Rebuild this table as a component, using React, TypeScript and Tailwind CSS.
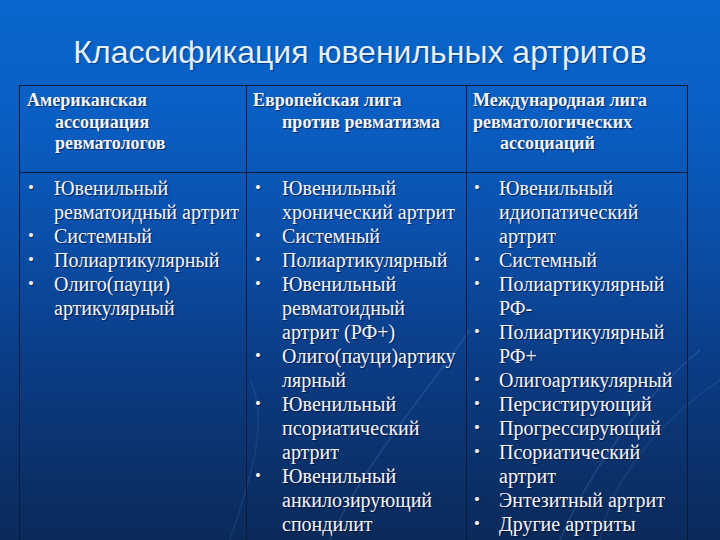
import React from "react";

type Item = string[];

const col1: Item[] = [
  ["Ювенильный", "ревматоидный артрит"],
  ["Системный"],
  ["Полиартикулярный"],
  ["Олиго(пауци)", "артикулярный"],
];
const col2: Item[] = [
  ["Ювенильный", "хронический артрит"],
  ["Системный"],
  ["Полиартикулярный"],
  ["Ювенильный", "ревматоидный", "артрит (РФ+)"],
  ["Олиго(пауци)артику", "лярный"],
  ["Ювенильный", "псориатический", "артрит"],
  ["Ювенильный", "анкилозирующий", "спондилит"],
];
const col3: Item[] = [
  ["Ювенильный", "идиопатический", "артрит"],
  ["Системный"],
  ["Полиартикулярный", "РФ-"],
  ["Полиартикулярный", "РФ+"],
  ["Олигоартикулярный"],
  ["Персистирующий"],
  ["Прогрессирующий"],
  ["Псориатический", "артрит"],
  ["Энтезитный артрит"],
  ["Другие артриты"],
];

function List({ items, bulletCls }: { items: Item[]; bulletCls: string }) {
  return (
    <div className="pt-[3px]">
      {items.map((it, i) => (
        <div key={i} className="flex">
          <div className={`${bulletCls} shrink-0 h-[24px] leading-[24px] text-[17px]`}>•</div>
          <div>
            {it.map((l, j) => (
              <div key={j} className="whitespace-nowrap h-[24px] leading-[24px]">
                {l}
              </div>
            ))}
          </div>
        </div>
      ))}
    </div>
  );
}

export default function App() {
  return (
    <div className="relative w-[720px] h-[540px] overflow-hidden bg-[linear-gradient(180deg,#0766cc_0%,#0a5fc4_20%,#0a4ea8_45%,#0b3a80_70%,#0a2a5a_100%)]">
      <svg className="absolute inset-0 pointer-events-none" width="720" height="540" viewBox="0 0 720 540">
        <path d="M330 540 C 360 470, 420 400, 470 330" stroke="rgba(120,170,255,0.18)" strokeWidth="1.5" fill="none" />
        <path d="M560 540 C 590 470, 640 400, 700 350" stroke="rgba(120,170,255,0.18)" strokeWidth="1.5" fill="none" />
        <path d="M600 540 C 610 480, 660 420, 720 380" stroke="rgba(120,170,255,0.12)" strokeWidth="1.5" fill="none" />
        <path d="M230 540 C 250 480, 270 420, 250 380" stroke="rgba(120,170,255,0.12)" strokeWidth="1.5" fill="none" />
      </svg>
      <div className="relative">
        <div className="h-[85px] pt-[32px] text-center text-[32px] leading-[40px] text-[#e2f0ff] font-[Liberation_Sans,Arial,sans-serif] [text-shadow:1px_1px_1px_rgba(0,20,60,0.5)]">
          Классификация ювенильных артритов
        </div>
        <div className="ml-[19px] w-[669px] border border-[#0b1a3c] text-[#f4f6ff] font-[Liberation_Serif,Times_New_Roman,serif] [text-shadow:1px_1px_1px_rgba(0,0,30,0.6)]">
          <div className="grid grid-cols-[227px_220px_222px] h-[87px] border-b border-[#0b1a3c] font-bold text-[18px] leading-[21.5px]">
            <div className="pt-[4px] border-r border-[#0b1a3c]">
              <div className="pl-[7px]">Американская</div>
              <div className="pl-[35px]">ассоциация</div>
              <div className="pl-[35px]">ревматологов</div>
            </div>
            <div className="pt-[4px] border-r border-[#0b1a3c]">
              <div className="pl-[6px]">Европейская лига</div>
              <div className="pl-[35px]">против ревматизма</div>
            </div>
            <div className="pt-[4px]">
              <div className="pl-[6px]">Международная лига</div>
              <div className="pl-[6px]">ревматологических</div>
              <div className="pl-[33px]">ассоциаций</div>
            </div>
          </div>
          <div className="grid grid-cols-[227px_220px_222px] h-[400px] text-[20px]">
            <div className="border-r border-[#0b1a3c]">
              <List items={col1} bulletCls="w-[34px] pl-[8px]" />
            </div>
            <div className="border-r border-[#0b1a3c]">
              <List items={col2} bulletCls="w-[35px] pl-[8px]" />
            </div>
            <div>
              <List items={col3} bulletCls="w-[32px] pl-[7px]" />
            </div>
          </div>
        </div>
      </div>
    </div>
  );
}
